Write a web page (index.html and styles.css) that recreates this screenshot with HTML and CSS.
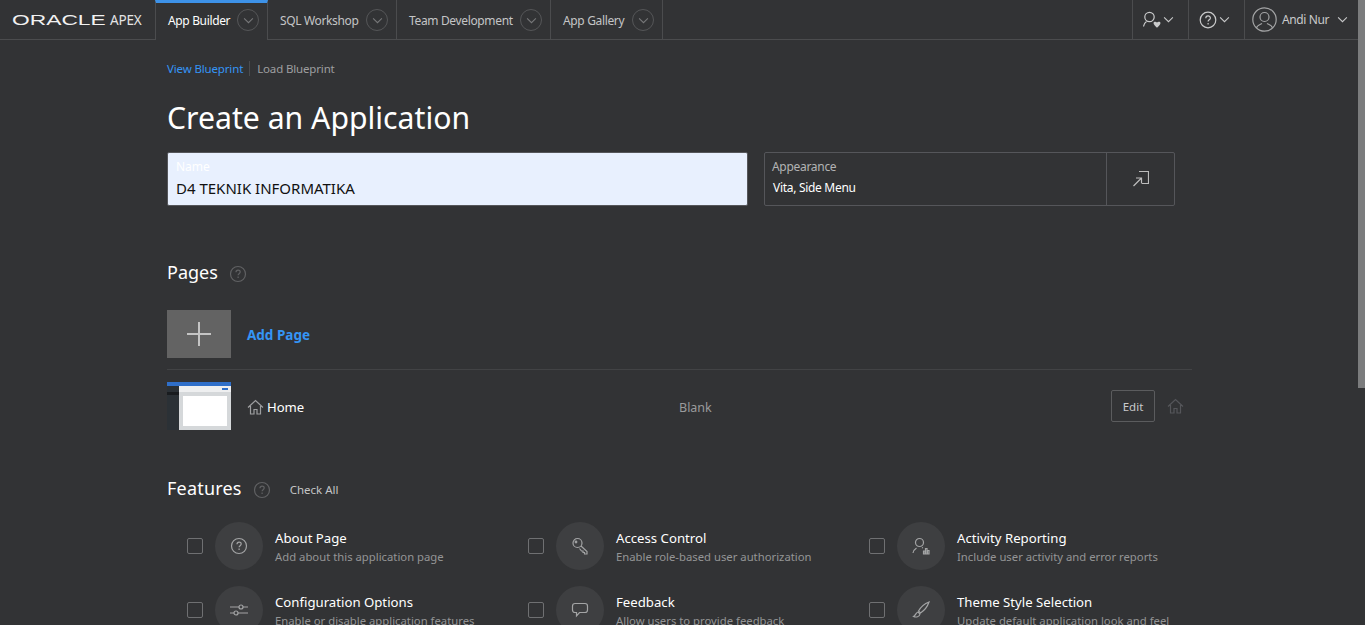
FILE: index.html
```html
<!DOCTYPE html>
<html lang="en">
<head>
    <meta charset="UTF-8">
    <title>Create an Application</title>
    <link rel="stylesheet" href="styles.css">
</head>
<body>
    <header class="topbar">
        <div class="brand"><span class="oracle">ORACLE</span><span class="apex">APEX</span></div>
        <nav class="tabs">
            <a class="tab tab-active tab-builder">App Builder <span class="tab-arrow"><svg viewBox="0 0 12 8"><path d="M1 1.5l5 5 5-5"/></svg></span></a>
            <a class="tab tab-sql">SQL Workshop <span class="tab-arrow"><svg viewBox="0 0 12 8"><path d="M1 1.5l5 5 5-5"/></svg></span></a>
            <a class="tab tab-team">Team Development <span class="tab-arrow"><svg viewBox="0 0 12 8"><path d="M1 1.5l5 5 5-5"/></svg></span></a>
            <a class="tab tab-gallery">App Gallery <span class="tab-arrow"><svg viewBox="0 0 12 8"><path d="M1 1.5l5 5 5-5"/></svg></span></a>
        </nav>
        <div class="tools">
            <a class="tool tool-admin">
                <svg class="tool-icon" width="20" height="20" viewBox="0 0 20 20"><circle cx="6.500" cy="7" r="4.700"/><path d="M.5 16.500C1 14 2 12.500 3.500 11.500"/><path class="solid" d="M10.500 13c0-1.400 2.400-1.800 3.500-.5 1.100-1.300 3.500-.9 3.500.5 0 1.700-2.200 3.400-3.500 4.800-1.300-1.400-3.500-3.100-3.500-4.800z"/></svg>
                <svg class="chev" viewBox="0 0 12 8"><path d="M1 1.500l5 5 5-5"/></svg>
            </a>
            <a class="tool tool-help">
                <svg class="tool-icon" width="18" height="18" viewBox="0 0 18 18"><circle cx="9" cy="9" r="7.800"/><path d="M6.800 7.200c0-3 4.600-3 4.600-.2 0 1.800-2.300 1.800-2.300 3.500"/><path d="M9.100 12v1.500"/></svg>
                <svg class="chev" viewBox="0 0 12 8"><path d="M1 1.500l5 5 5-5"/></svg>
            </a>
            <a class="tool tool-user">
                <svg class="avatar" width="25" height="25" viewBox="0 0 25 25"><circle cx="12.500" cy="12.500" r="11.700"/><circle cx="12.500" cy="10" r="4.500"/><path d="M4.500 21c.5-3 4-3.500 5.500-4.500M20.500 21c-.5-3-4-3.500-5.500-4.500"/></svg>
                <span class="user-name">Andi Nur</span>
                <svg class="chev" viewBox="0 0 12 8"><path d="M1 1.500l5 5 5-5"/></svg>
            </a>
        </div>
    </header>

    <main class="content">
        <div class="blueprint">
            <a class="link-active">View Blueprint</a>
            <a class="link-plain">Load Blueprint</a>
        </div>
        <h1>Create an Application</h1>

        <div class="top-fields">
            <div class="name-field">
                <label>Name</label>
                <div class="name-value">D4 TEKNIK INFORMATIKA</div>
            </div>
            <div class="appearance">
                <div class="appearance-text">
                    <label>Appearance</label>
                    <div class="appearance-value">Vita, Side Menu</div>
                </div>
                <div class="appearance-btn">
                    <svg width="16" height="16" viewBox="0 0 16 16"><path d="M6 .5h9.500v12H9"/><path d="M.5 15L8 7.500M3 7h5.500v5.500"/></svg>
                </div>
            </div>
        </div>

        <div class="section-head pages-head">
            <h2>Pages</h2>
            <svg class="help" width="18" height="18" viewBox="0 0 18 18"><circle cx="9" cy="9" r="7.500"/><path d="M7 7.200c0-2.800 4.200-2.800 4.200-.2 0 1.700-2.100 1.700-2.100 3.300"/><path d="M9.100 11.600v1.500"/></svg>
        </div>

        <div class="add-row">
            <div class="add-box"><svg width="26" height="26" viewBox="0 0 26 26"><path d="M13 1v24M1 13h24"/></svg></div>
            <a class="add-link">Add Page</a>
        </div>

        <div class="page-row">
            <div class="thumb">
                <div class="thumb-top"></div>
                <div class="thumb-body">
                    <div class="thumb-side"><div class="thumb-side-dark"></div></div>
                    <div class="thumb-main">
                        <div class="thumb-head"><span></span></div>
                        <div class="thumb-card"></div>
                    </div>
                </div>
            </div>
            <div class="page-name">
                <svg class="home" width="17" height="16" viewBox="0 0 17 16"><path d="M1 8.500L8.500 1.500 16 8.500M3.500 7v8h3.500v-4.500h3V15h3.500V7"/></svg>
                <span>Home</span>
            </div>
            <div class="page-type">Blank</div>
            <button class="edit-btn">Edit</button>
            <svg class="home home-off" width="17" height="16" viewBox="0 0 17 16"><path d="M1 8.500L8.500 1.500 16 8.500M3.500 7v8h3.500v-4.500h3V15h3.500V7"/></svg>
        </div>

        <div class="section-head features-head">
            <h2>Features</h2>
            <svg class="help" width="18" height="18" viewBox="0 0 18 18"><circle cx="9" cy="9" r="7.500"/><path d="M7 7.200c0-2.800 4.200-2.800 4.200-.2 0 1.700-2.100 1.700-2.100 3.300"/><path d="M9.100 11.600v1.500"/></svg>
            <a class="check-all">Check All</a>
        </div>

        <div class="features">
            <div class="feature">
                <span class="check"></span>
                <span class="circle"><svg width="18" height="18" viewBox="0 0 18 18"><circle cx="9" cy="9" r="7.500"/><path d="M7 7.200c0-2.800 4.200-2.800 4.200-.2 0 1.700-2.100 1.700-2.100 3.300"/><path d="M9.100 11.600v1.500"/></svg></span>
                <div class="f-text"><div class="f-title">About Page</div><div class="f-desc">Add about this application page</div></div>
            </div>
            <div class="feature">
                <span class="check"></span>
                <span class="circle"><svg width="18" height="18" viewBox="0 0 18 18"><circle cx="6.500" cy="6" r="4.500"/><circle cx="5" cy="5" r=".8"/><path d="M10 9l6 5.500v2.500h-2.500v-1.500H12V14h-1.500l-2-2.500"/></svg></span>
                <div class="f-text"><div class="f-title">Access Control</div><div class="f-desc">Enable role-based user authorization</div></div>
            </div>
            <div class="feature">
                <span class="check"></span>
                <span class="circle"><svg width="18" height="18" viewBox="0 0 18 18"><circle cx="7.500" cy="5.500" r="4"/><path d="M1 16c.3-2.500 2-4 3.500-5M10 10.500l1 .5"/><path d="M11.500 17v-3h1.500v3zM13.500 17v-5.500h1.500V17zM15.500 17v-3.500H17V17z"/></svg></span>
                <div class="f-text"><div class="f-title">Activity Reporting</div><div class="f-desc">Include user activity and error reports</div></div>
            </div>
            <div class="feature">
                <span class="check"></span>
                <span class="circle"><svg width="18" height="18" viewBox="0 0 18 18"><path d="M0 6h9M13 6h5M0 12h4M8 12h10"/><circle cx="11" cy="6" r="2"/><circle cx="6" cy="12" r="2"/></svg></span>
                <div class="f-text"><div class="f-title">Configuration Options</div><div class="f-desc">Enable or disable application features</div></div>
            </div>
            <div class="feature">
                <span class="check"></span>
                <span class="circle"><svg width="18" height="18" viewBox="0 0 18 18"><path d="M4 2.500h10c1.500 0 2.500 1 2.500 2.500v4c0 1.500-1 2.500-2.500 2.500H8.500L5.500 15v-3.500H4C2.500 11.500 1.500 10.500 1.500 9V5C1.500 3.500 2.500 2.500 4 2.500z"/></svg></span>
                <div class="f-text"><div class="f-title">Feedback</div><div class="f-desc">Allow users to provide feedback</div></div>
            </div>
            <div class="feature">
                <span class="check"></span>
                <span class="circle"><svg width="18" height="18" viewBox="0 0 18 18"><path d="M17 1C13 2.500 8.500 6.500 6.500 10l2 2C11.500 10 15.500 5.500 17 1z"/><path d="M6 11c-2 .5-2 3-4.500 4.500 2.500 1 6 .5 6.500-2.500z"/></svg></span>
                <div class="f-text"><div class="f-title">Theme Style Selection</div><div class="f-desc">Update default application look and feel</div></div>
            </div>
        </div>
    </main>

    <div class="scroll-thumb"></div>
</body>
</html>
```

FILE: styles.css
```css
* {
    box-sizing: border-box;
}
html, body {
    height: 625px;
    overflow: hidden;
}
body {
    margin: 0;
    background: #323335;
    color: #fff;
    font-family: "Noto Sans", "Open Sans", Arial, sans-serif;
    font-size: 12px;
}
svg {
    fill: none;
    stroke: currentColor;
    stroke-width: 1.2;
    display: block;
}

/* top bar */
.topbar {
    display: flex;
    height: 40px;
    border-bottom: 1px solid #4b4c4e;
}
.brand {
    width: 155px;
    display: flex;
    align-items: center;
    padding-left: 12px;
    color: #f1f1f1;
}
.oracle {
    font-family: "Liberation Sans", Arial, sans-serif;
    font-size: 15px;
    line-height: 16px;
    width: 93px;
    display: inline-block;
    transform: scaleX(1.52);
    transform-origin: left center;
    white-space: nowrap;
}
.apex {
    font-size: 13.500px;
    margin-left: 5px;
    letter-spacing: -0.2px;
    color: #e4e4e4;
}
.tabs {
    display: flex;
}
.tab {
    display: flex;
    align-items: center;
    justify-content: space-between;
    height: 40px;
    padding: 0 2px 0 12px;
    border-right: 1px solid #4b4c4e;
    color: #c4c5c6;
    font-size: 12px;
    letter-spacing: -0.35px;
    white-space: nowrap;
}
.tab-builder { width: 113px; }
.tab-sql { width: 129px; }
.tab-team { width: 154px; }
.tab-gallery { width: 112px; }
.tab-active {
    color: #fff;
    border-left: 1px solid #4b4c4e;
    border-top: 3px solid #3d92e8;
    padding-bottom: 3px;
    height: 40px;
    background: #323335;
    margin-bottom: -1px;
}
.tab-arrow {
    width: 22px;
    height: 22px;
    border-radius: 50%;
    border: 1px solid #555658;
    display: flex;
    align-items: center;
    justify-content: center;
    color: #77787a;
    margin-right: 6px;
}
.tab-arrow svg {
    width: 11px;
    height: 7px;
}
.tools {
    margin-left: auto;
    margin-right: 7px;
    display: flex;
}
.tool {
    display: flex;
    align-items: center;
    height: 39px;
    border-left: 1px solid #4b4c4e;
    color: #c9cacb;
}
.tool-admin { width: 56px; padding-left: 10px; gap: 0; }
.tool-help { width: 56px; padding-left: 10px; gap: 2px; }
.tool-user { width: 114px; padding-left: 7px; }
.chev {
    width: 11px;
    height: 7px;
}
.avatar {
    color: #a3a4a5;
}
.user-name {
    margin: 0 8px 0 5px;
    font-size: 12px;
    letter-spacing: -0.4px;
    white-space: nowrap;
}
.solid {
    fill: currentColor;
    stroke: none;
}

/* main column */
.content {
    width: 1025px;
    margin-left: 167px;
}
.blueprint {
    display: flex;
    align-items: center;
    height: 18px;
    margin-top: 19px;
    font-size: 11.500px;
    letter-spacing: -0.15px;
}
.link-active {
    color: #3595f5;
    padding-right: 6px;
    border-right: 1px solid #4b4c4e;
}
.link-plain {
    color: #9e9fa0;
    padding-left: 7px;
}
h1 {
    margin: 20px 0 0;
    font-size: 30.200px;
    line-height: 42px;
    font-weight: 400;
}
.top-fields {
    display: flex;
    margin-top: 13px;
}
.name-field {
    width: 581px;
    height: 54px;
    background: #e8f0fe;
    border: 1px solid #55565a;
    border-radius: 2px;
    padding: 6px 8px;
}
.name-field label {
    display: block;
    color: #fff;
    font-size: 12px;
    line-height: 16px;
}
.name-value {
    color: #111;
    font-size: 15px;
    line-height: 20px;
    margin-top: 3px;
}
.appearance {
    display: flex;
    width: 411px;
    height: 54px;
    margin-left: 16px;
    border: 1px solid #55565a;
    border-radius: 2px;
}
.appearance-text {
    flex: 1;
    padding: 6px 8px;
    letter-spacing: -0.3px;
}
.appearance-text label {
    display: block;
    color: #b2b3b4;
    font-size: 12px;
    line-height: 16px;
    margin-left: -1px;
}
.appearance-value {
    font-size: 12px;
    line-height: 20px;
    margin-top: 3px;
}
.appearance-btn {
    width: 68px;
    border-left: 1px solid #55565a;
    display: flex;
    align-items: center;
    justify-content: center;
    color: #bdbdbd;
}
.section-head {
    display: flex;
    align-items: center;
}
h2 {
    margin: 0;
    font-size: 18px;
    line-height: 26px;
    font-weight: 400;
}
.help {
    color: #606163;
    margin-left: 11px;
    margin-top: 4px;
}
.pages-head {
    margin-top: 53px;
}
.add-row {
    display: flex;
    align-items: center;
    height: 60px;
    margin-top: 25px;
    padding-bottom: 11px;
    border-bottom: 1px solid #424345;
}
.add-box {
    width: 64px;
    height: 48px;
    background: #636363;
    color: #c4c4c4;
    display: flex;
    align-items: center;
    justify-content: center;
}
.add-box svg {
    stroke-width: 2;
}
.add-link {
    margin-left: 16px;
    padding-top: 2px;
    color: #3595f5;
    font-size: 13.500px;
    font-weight: 700;
}
.page-row {
    display: flex;
    align-items: center;
    height: 48px;
    margin-top: 12px;
}
.thumb {
    width: 64px;
    height: 48px;
    display: flex;
    flex-direction: column;
}
.thumb-top {
    height: 4px;
    background: #2f6fc9;
}
.thumb-body {
    flex: 1;
    display: flex;
}
.thumb-side {
    width: 12px;
    background: #2b3136;
    padding-top: 6px;
}
.thumb-side-dark {
    height: 3px;
    background: #191c1f;
}
.thumb-main {
    flex: 1;
    background: #d5d8da;
}
.thumb-head {
    height: 6px;
    background: #eeeff0;
    display: flex;
    justify-content: flex-end;
    align-items: center;
    padding-right: 3px;
}
.thumb-head span {
    width: 6px;
    height: 2px;
    background: #2f6fc9;
}
.thumb-card {
    height: 30px;
    margin: 4px 4px 0;
    background: #fff;
}
.page-name {
    display: flex;
    align-items: center;
    width: 432px;
    margin-left: 16px;
    padding-top: 2px;
    font-size: 13.100px;
}
.page-name span {
    margin-left: 3px;
}
.home {
    color: #9d9ea0;
    flex: none;
}
.page-type {
    width: 432px;
    padding-top: 2px;
    color: #9a9b9c;
    font-size: 12.500px;
}
.edit-btn {
    width: 44px;
    height: 32px;
    background: transparent;
    border: 1px solid #5b5c5e;
    border-radius: 2px;
    color: #c9cacb;
    font: inherit;
    font-size: 11.500px;
}
.home-off {
    color: #55565a;
    margin-left: 12px;
}
.features-head {
    margin-top: 45px;
}
.features-head h2 {
    letter-spacing: 0.2px;
}
.features-head .help {
    margin-left: 11px;
    margin-top: 3px;
}
.check-all {
    margin-left: 19px;
    margin-top: 3px;
    color: #c4c5c6;
    font-size: 11.500px;
}
.features {
    display: grid;
    grid-template-columns: repeat(3, 341px);
    grid-auto-rows: 64px;
    padding-left: 20px;
    margin-top: 13px;
}
.feature {
    display: flex;
    align-items: center;
}
.check {
    width: 16px;
    height: 16px;
    border: 1px solid #6f7072;
    border-radius: 2px;
    flex: none;
}
.circle {
    width: 48px;
    height: 48px;
    margin: 0 12px;
    border-radius: 50%;
    background: #3e3f41;
    color: #a3a4a5;
    display: flex;
    align-items: center;
    justify-content: center;
    flex: none;
}
.f-text {
    padding-top: 2px;
}
.f-title {
    font-size: 13.200px;
    line-height: 20px;
}
.f-desc {
    color: #949596;
    font-size: 11.300px;
    line-height: 18px;
}
.scroll-thumb {
    position: absolute;
    top: 0;
    right: 0;
    width: 7px;
    height: 388px;
    background: #7b7c7d;
}
```
